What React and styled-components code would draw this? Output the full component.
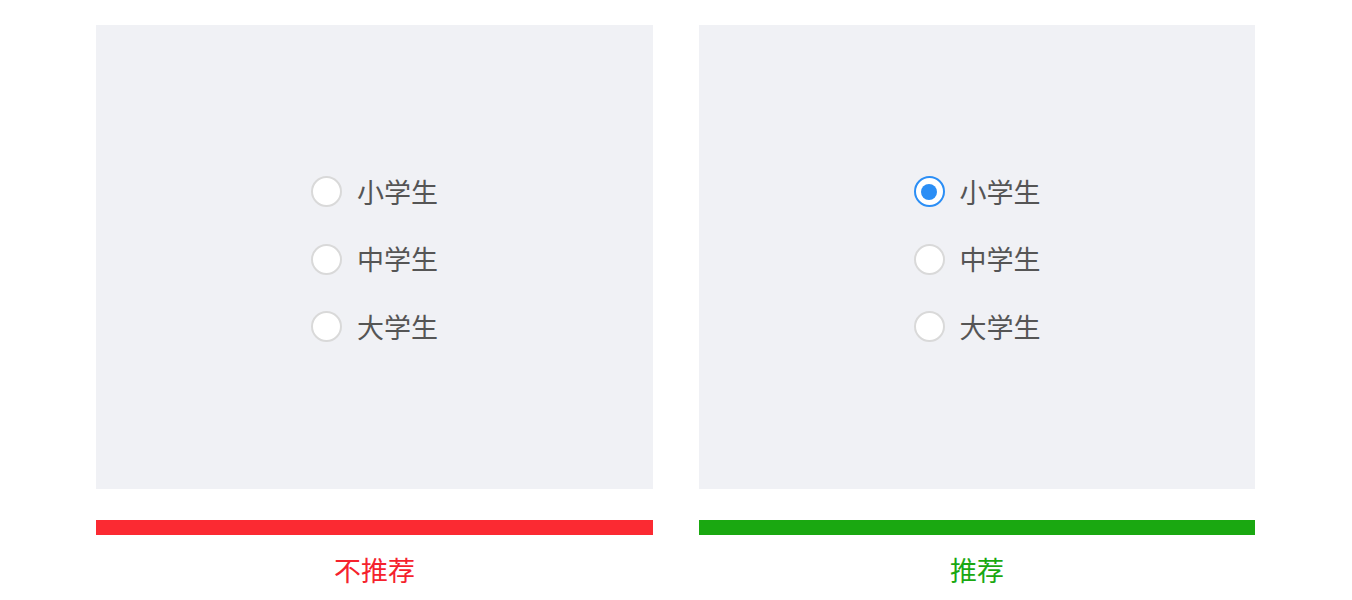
import React, { useState } from 'react'
import styled, { createGlobalStyle } from 'styled-components'

const GlobalStyle = createGlobalStyle`
    body {
        margin: 0;
        background: #ffffff;
        font-family: "Noto Sans CJK SC", "Noto Sans", sans-serif;
    }
`;

const Page = styled.div`
    display: grid;
    grid-template-columns: 557px 556px;
    column-gap: 46px;
    padding: 25px 0 0 96px;
`;

const Column = styled.div`
    display: flex;
    flex-direction: column;
`;

const Panel = styled.div`
    height: 464px;
    background-color: #f0f1f5;
    display: flex;
    align-items: center;
    justify-content: center;
`;

const Group = styled.div`
    display: flex;
    flex-direction: column;
    gap: 37.5px;
    margin-top: 4px;
`;

const Option = styled.label`
    display: flex;
    align-items: center;
    gap: 15px;
    height: 30px;
    cursor: pointer;
`;

const Circle = styled.span`
    box-sizing: border-box;
    width: 31px;
    height: 31px;
    border-radius: 50%;
    background: #ffffff;
    border: ${(props) => (props.checked ? "2px solid #2b8ef5" : "2px solid #d9d9d9")};
    display: flex;
    align-items: center;
    justify-content: center;

    &::after {
        content: "";
        width: 16px;
        height: 16px;
        border-radius: 50%;
        background: #2b8ef5;
        display: ${(props) => (props.checked ? "block" : "none")};
    }
`;

const OptionText = styled.span`
    font-size: 27px;
    line-height: 30px;
    color: #555555;
`;

const Bar = styled.div`
    height: 15px;
    margin-top: 31px;
    background-color: ${(props) => props.color};
`;

const Caption = styled.div`
    margin-top: 17px;
    text-align: center;
    font-size: 27px;
    line-height: 36px;
    color: ${(props) => props.color};
`;

const options = ["小学生", "中学生", "大学生"];

const RadioDemo = ({ initial }) => {
    const [value, setValue] = useState(initial);
    return (
        <Group>
            {options.map((o) => (
                <Option key={o} onClick={() => setValue(o)}>
                    <Circle checked={value === o} />
                    <OptionText>{o}</OptionText>
                </Option>
            ))}
        </Group>
    );
};

const App = () => {
    return (
        <>
            <GlobalStyle />
            <Page>
                <Column>
                    <Panel>
                        <RadioDemo initial={null} />
                    </Panel>
                    <Bar color="#fb2a32" />
                    <Caption color="#f5222d">不推荐</Caption>
                </Column>
                <Column>
                    <Panel>
                        <RadioDemo initial="小学生" />
                    </Panel>
                    <Bar color="#1aa811" />
                    <Caption color="#1aa811">推荐</Caption>
                </Column>
            </Page>
        </>
    );
};

export default App
